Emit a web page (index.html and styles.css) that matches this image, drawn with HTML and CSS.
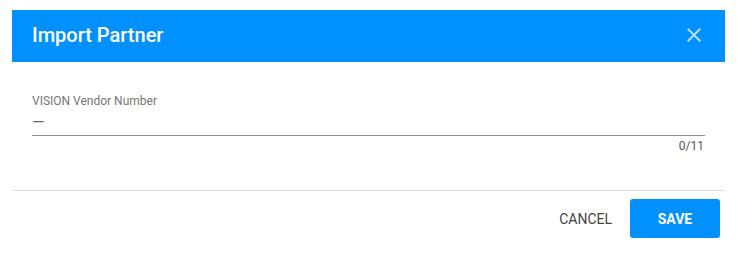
FILE: index.html
```html
<!DOCTYPE html>
<html lang="en">
<head>
    <meta charset="UTF-8">
    <meta name="viewport" content="width=device-width, initial-scale=1.0">
    <title>Import Partner</title>

    <link rel="stylesheet" href="styles.css">
</head>
<body>

    <div class="dialog">
        <div class="dialog-header">
            <h1 class="dialog-title">Import Partner</h1>
            <button class="close" aria-label="Close">
                <svg width="24" height="24" viewBox="0 0 24 24">
                    <path d="M19 6.41L17.59 5 12 10.59 6.41 5 5 6.41 10.59 12 5 17.59 6.41 19 12 13.41 17.59 19 19 17.59 13.41 12z"/>
                </svg>
            </button>
        </div>

        <div class="dialog-body">
            <label class="field-label">VISION Vendor Number</label>
            <div class="field-input">—</div>
            <div class="counter">0/11</div>
        </div>

        <div class="dialog-footer">
            <button class="btn cancel">Cancel</button>
            <button class="btn save">Save</button>
        </div>
    </div>

</body>
</html>
```

FILE: styles.css
```css
* {
    margin: 0;
    padding: 0;
    box-sizing: border-box;
}

body {
    background-color: white;
    font-family: Roboto, "Liberation Sans", sans-serif;
}

.dialog {
    width: 713px;
    margin: 10px 0 0 12px;
    background-color: white;
}

.dialog-header {
    display: flex;
    align-items: center;
    justify-content: space-between;
    height: 52px;
    padding: 0 19px 2px 20px;
    background-color: #0091ff;
}

.dialog-title {
    color: white;
    font-size: 20px;
    font-weight: 500;
}

.close {
    display: flex;
    border: none;
    background: none;
    cursor: pointer;
}

.close svg {
    fill: rgba(255, 255, 255, 0.7);
}

.dialog-body {
    display: flex;
    flex-direction: column;
    padding: 32px 20px 37px;
}

.field-label {
    font-size: 12px;
    line-height: 14px;
    color: #757575;
}

.field-input {
    height: 28px;
    padding-top: 3px;
    font-size: 16px;
    line-height: 23px;
    color: #666;
    border-bottom: 1px solid #8c8c8c;
}

.counter {
    margin-top: 3px;
    text-align: right;
    font-size: 12px;
    line-height: 14px;
    color: #555;
    padding-right: 1px;
}

.dialog-footer {
    display: flex;
    justify-content: flex-end;
    gap: 6px;
    padding: 8px 5px 8px 0;
    border-top: 1px solid #dedede;
}

.btn {
    height: 39px;
    border: none;
    border-radius: 3px;
    font-family: inherit;
    font-size: 14px;
    text-transform: uppercase;
    cursor: pointer;
}

.cancel {
    padding: 0 12px;
    background: none;
    color: #444;
}

.save {
    width: 90px;
    background-color: #0091ff;
    color: white;
    font-weight: 700;
}
```
